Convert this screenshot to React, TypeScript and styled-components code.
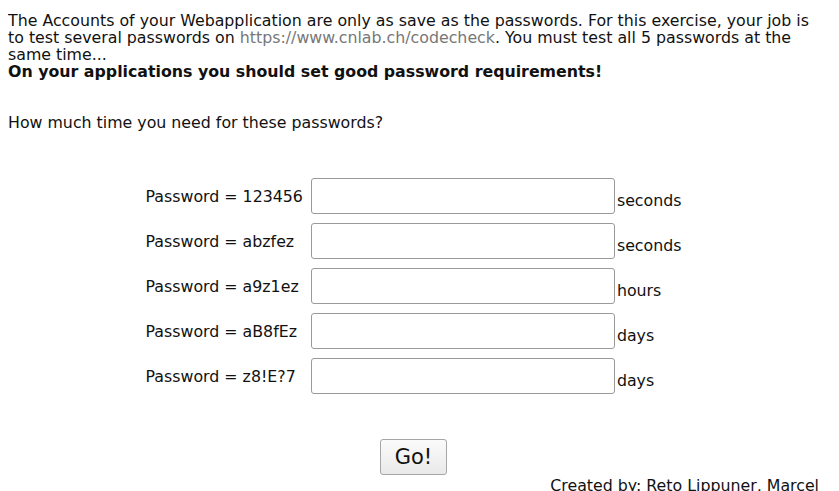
import React from "react";
import styled, { createGlobalStyle } from "styled-components";

const GlobalStyle = createGlobalStyle`
  body {
    margin: 8px;
    font-family: "DejaVu Sans", "Liberation Sans", sans-serif;
    font-size: 15.8px;
    color: #111;
    background: #fff;
  }
`;

const Page = styled.div`
  padding: 4px 12px 0 0;
`;

const Intro = styled.p`
  margin: 0;
  line-height: 17px;
`;

const Link = styled.a`
  color: #777;
  text-decoration: none;
`;

const Strong = styled.strong`
  display: block;
  font-weight: bold;
`;

const Question = styled.p`
  margin: 34px 0 0;
  line-height: 17px;
`;

const Form = styled.div`
  display: grid;
  grid-template-columns: auto auto;
  justify-content: center;
  column-gap: 8px;
  row-gap: 9px;
  margin-top: 47px;
`;

const Label = styled.label`
  align-self: center;
  line-height: 17px;
  white-space: nowrap;
`;

const Field = styled.div`
  display: flex;
  align-items: flex-end;
  gap: 2px;
`;

const Input = styled.input`
  box-sizing: border-box;
  width: 304px;
  height: 36px;
  margin: 0;
  padding: 0 6px;
  border: 1px solid #9a9a9a;
  border-radius: 3px;
  background: #fff;
  font-family: inherit;
  font-size: 18px;
  outline: none;
`;

const Unit = styled.span`
  line-height: 17px;
  margin-bottom: 5px;
`;

const Actions = styled.div`
  display: flex;
  justify-content: center;
  margin-top: 45px;
`;

const GoButton = styled.button`
  box-sizing: border-box;
  height: 36px;
  width: 67px;
  padding: 0;
  border: 1px solid #a6a6a6;
  border-radius: 3px;
  background: linear-gradient(#fbfbfb, #e9e9e9);
  font-family: inherit;
  font-size: 21px;
  color: #111;
`;

const Credits = styled.div`
  text-align: right;
  margin-top: 2px;
  line-height: 17px;
`;

const rows = [
  { pw: "123456", unit: "seconds" },
  { pw: "abzfez", unit: "seconds" },
  { pw: "a9z1ez", unit: "hours" },
  { pw: "aB8fEz", unit: "days" },
  { pw: "z8!E?7", unit: "days" },
];

export default function App() {
  return (
    <>
      <GlobalStyle />
      <Page>
        <Intro>
          The Accounts of your Webapplication are only as save as the passwords. For this
          exercise, your job is to test several passwords on{" "}
          <Link href="#">https://www.cnlab.ch/codecheck</Link>. You must test all 5 passwords
          at the same time...
          <Strong>On your applications you should set good password requirements!</Strong>
        </Intro>
        <Question>How much time you need for these passwords?</Question>
        <Form>
          {rows.map((r, i) => (
            <React.Fragment key={i}>
              <Label htmlFor={`pw${i}`}>Password = {r.pw}</Label>
              <Field>
                <Input id={`pw${i}`} type="text" />
                <Unit>{r.unit}</Unit>
              </Field>
            </React.Fragment>
          ))}
        </Form>
        <Actions>
          <GoButton>Go!</GoButton>
        </Actions>
        <Credits>Created by: Reto Lippuner, Marcel</Credits>
      </Page>
    </>
  );
}
